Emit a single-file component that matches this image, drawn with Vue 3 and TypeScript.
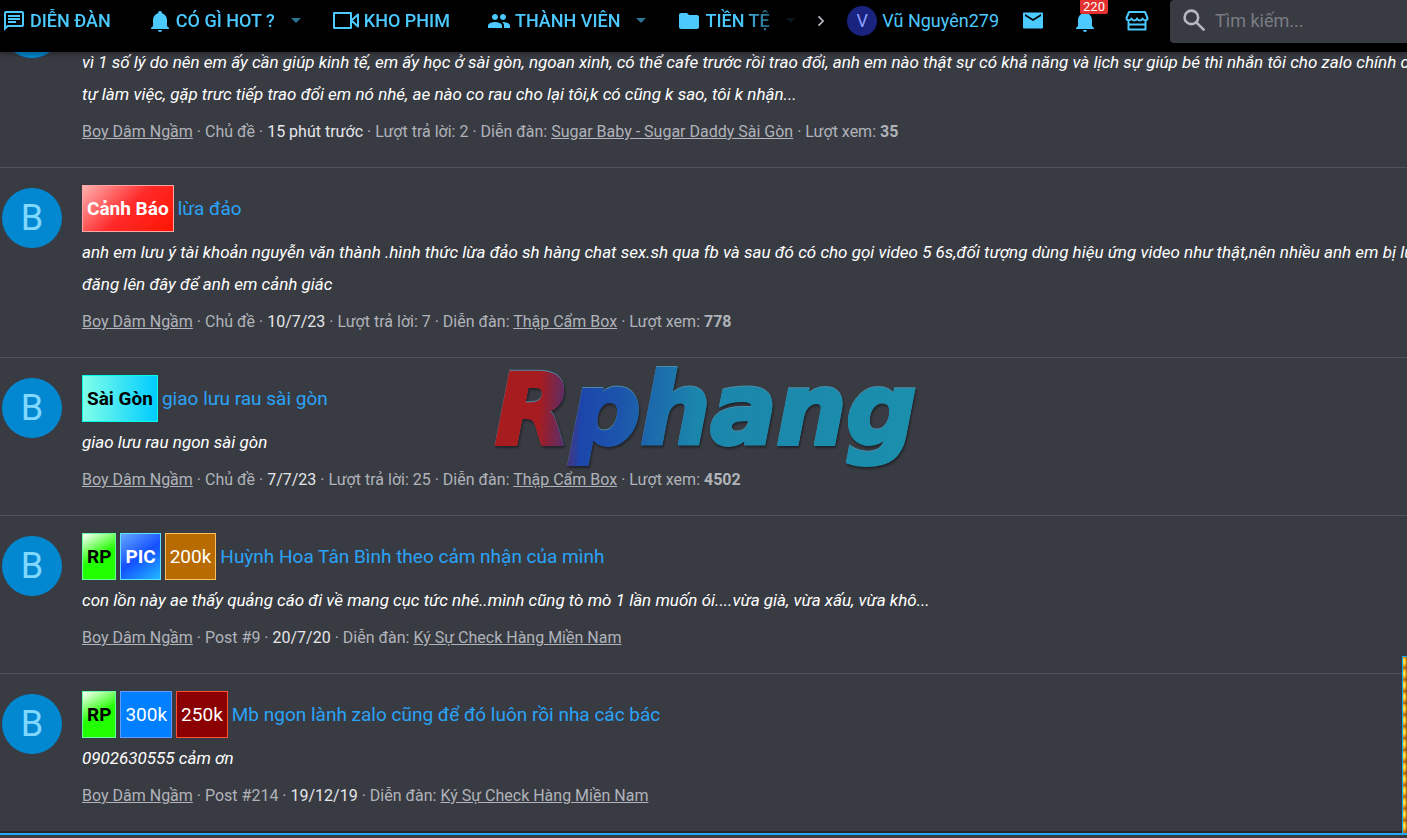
<script setup lang="ts">
interface Label { text: string; kind: string }
interface Post {
  labels: Label[]
  title: string
  lines: string[]
  type: string
  date: string
  replies?: number
  forum: string
  views?: number
}

const posts: Post[] = [
  {
    labels: [],
    title: '',
    lines: [
      'vì 1 số lý do nên em ấy cần giúp kinh tế, em ấy học ở sài gòn, ngoan xinh, có thể cafe trước rồi trao đổi, anh em nào thật sự có khả năng và lịch sự giúp bé thì nhắn tôi cho zalo chính chủ',
      'tự làm việc, gặp trưc tiếp trao đổi em nó nhé, ae nào co rau cho lại tôi,k có cũng k sao, tôi k nhận...',
    ],
    type: 'Chủ đề', date: '15 phút trước', replies: 2, forum: 'Sugar Baby - Sugar Daddy Sài Gòn', views: 35,
  },
  {
    labels: [{ text: 'Cảnh Báo', kind: 'warn' }],
    title: 'lừa đảo',
    lines: [
      'anh em lưu ý tài khoản nguyễn văn thành .hình thức lừa đảo sh hàng chat sex.sh qua fb và sau đó có cho gọi video 5 6s,đối tượng dùng hiệu ứng video như thật,nên nhiều anh em bị lừa,t',
      'đăng lên đây để anh em cảnh giác',
    ],
    type: 'Chủ đề', date: '10/7/23', replies: 7, forum: 'Thập Cẩm Box', views: 778,
  },
  {
    labels: [{ text: 'Sài Gòn', kind: 'saigon' }],
    title: 'giao lưu rau sài gòn',
    lines: ['giao lưu rau ngon sài gòn'],
    type: 'Chủ đề', date: '7/7/23', replies: 25, forum: 'Thập Cẩm Box', views: 4502,
  },
  {
    labels: [{ text: 'RP', kind: 'rp' }, { text: 'PIC', kind: 'pic' }, { text: '200k', kind: 'k200' }],
    title: 'Huỳnh Hoa Tân Bình theo cảm nhận của mình',
    lines: ['con lồn này ae thấy quảng cáo đi về mang cục tức nhé..mình cũng tò mò 1 lần muốn ói....vừa già, vừa xấu, vừa khô...'],
    type: 'Post #9', date: '20/7/20', forum: 'Ký Sự Check Hàng Miền Nam',
  },
  {
    labels: [{ text: 'RP', kind: 'rp' }, { text: '300k', kind: 'k300' }, { text: '250k', kind: 'k250' }],
    title: 'Mb ngon lành zalo cũng để đó luôn rồi nha các bác',
    lines: ['0902630555 cảm ơn'],
    type: 'Post #214', date: '19/12/19', forum: 'Ký Sự Check Hàng Miền Nam',
  },
]
</script>

<template>
  <div class="page">
    <header class="bar">
      <nav class="nav">
        <a class="item" href="#">
          <svg class="icon" viewBox="0 0 24 24"><path d="M4 4h16v12H5.200L4 17.200V4m0-2c-1.100 0-2 .9-2 2v18l4-4h14c1.100 0 2-.9 2-2V4c0-1.100-.9-2-2-2H4zm2 10h8v2H6v-2zm0-3h12v2H6V9zm0-3h12v2H6V6z" /></svg>
          <span>DIỄN ĐÀN</span>
        </a>
        <span class="item has-menu">
          <a class="item-link" href="#">
            <svg class="icon" viewBox="0 0 24 24"><path d="M21 19v1H3v-1l2-2v-6c0-3.100 2.030-5.830 5-6.710V4a2 2 0 0 1 4 0v.29c2.970.88 5 3.610 5 6.710v6l2 2m-7 2a2 2 0 0 1-4 0" /></svg>
            <span>CÓ GÌ HOT ?</span>
          </a>
          <button class="caret" type="button" aria-label="Mở menu"><svg viewBox="0 0 10 5"><path d="M0 0h10L5 5z" /></svg></button>
        </span>
        <a class="item" href="#">
          <svg class="icon wide" viewBox="0 0 28 24"><path class="stroke" d="M2 4h17v15H2zM19.500 11.500 26 5.500v12z" /></svg>
          <span>KHO PHIM</span>
        </a>
        <span class="item has-menu">
          <a class="item-link" href="#">
            <svg class="icon" viewBox="0 0 24 24"><path d="M16 11c1.660 0 2.990-1.340 2.990-3S17.660 5 16 5s-3 1.340-3 3 1.340 3 3 3zm-8 0c1.660 0 2.990-1.340 2.990-3S9.660 5 8 5 5 6.340 5 8s1.340 3 3 3zm0 2c-2.330 0-7 1.170-7 3.500V19h14v-2.500C15 14.170 10.330 13 8 13zm8 0c-.29 0-.62.020-.97.050C16.190 13.890 17 15.020 17 16.500V19h6v-2.500c0-2.330-4.670-3.500-7-3.500z" /></svg>
            <span>THÀNH VIÊN</span>
          </a>
          <button class="caret" type="button" aria-label="Mở menu"><svg viewBox="0 0 10 5"><path d="M0 0h10L5 5z" /></svg></button>
        </span>
        <span class="item has-menu">
          <a class="item-link" href="#">
            <svg class="icon" viewBox="0 0 24 24"><path d="M10 4H4c-1.100 0-2 .9-2 2v12c0 1.100.9 2 2 2h16c1.100 0 2-.9 2-2V8c0-1.100-.9-2-2-2h-8l-2-2z" /></svg>
            <span>TIỀN TỆ</span>
          </a>
          <button class="caret" type="button" aria-label="Mở menu"><svg viewBox="0 0 10 5"><path d="M0 0h10L5 5z" /></svg></button>
        </span>
      </nav>
      <button class="next" type="button" aria-label="Tiếp">
        <svg viewBox="0 0 24 24"><path d="m9 6.500 5.500 5.500L9 17.500" /></svg>
      </button>
      <a class="user" href="#"><span class="user-avatar">V</span><span>Vũ Nguyên279</span></a>
      <div class="tools">
        <button type="button" aria-label="Hộp thư">
          <svg class="icon" viewBox="0 0 24 24"><path d="M21 3.500H3c-.6 0-1 .4-1 1v14c0 .6.400 1 1 1h18c.6 0 1-.4 1-1v-14c0-.6-.4-1-1-1zM20 7l-8 5-8-5V5l8 5 8-5v2z" /></svg>
        </button>
        <button type="button" aria-label="Thông báo">
          <svg class="icon" viewBox="0 0 24 24"><path d="M21 19v1H3v-1l2-2v-6c0-3.100 2.030-5.830 5-6.710V4a2 2 0 0 1 4 0v.29c2.970.88 5 3.610 5 6.710v6l2 2m-7 2a2 2 0 0 1-4 0" /></svg>
          <span class="badge">220</span>
        </button>
        <button type="button" aria-label="Cửa hàng">
          <svg class="icon" viewBox="0 0 24 24"><path class="stroke" d="M4 3h16l2.500 6c0 3-4 3-5 .5-1 2.500-4.500 2.500-5.500 0-1 2.500-4.500 2.500-5.500 0-1 2.500-5 2.500-5-.5zM3.500 12v8.500h17V12M3.500 15.500h17" /></svg>
        </button>
      </div>
      <label class="search">
        <svg viewBox="0 0 24 24"><circle cx="9" cy="9" r="6.500" /><path d="m14 14 7.500 7.500" /></svg>
        <input type="search" placeholder="Tìm kiếm..." aria-label="Tìm kiếm">
      </label>
    </header>

    <main class="list">
      <article v-for="(p, i) in posts" :key="i" class="post">
        <a class="avatar" href="#">B</a>
        <div class="body">
          <h3 class="title">
            <span v-for="l in p.labels" :key="l.text" class="label" :class="l.kind">{{ l.text }}</span>
            <a href="#">{{ p.title }}</a>
          </h3>
          <div class="snippet"><p v-for="line in p.lines" :key="line">{{ line }}</p></div>
          <div class="meta">
            <a href="#">Boy Dâm Ngầm</a> · {{ p.type }} · <time>{{ p.date }}</time><template v-if="p.replies !== undefined"> · Lượt trả lời: {{ p.replies }}</template> · Diễn đàn: <a href="#">{{ p.forum }}</a><template v-if="p.views !== undefined"> · Lượt xem: <b>{{ p.views }}</b></template>
          </div>
        </div>
      </article>
    </main>
    <div class="rule"></div>

    <svg class="watermark" viewBox="0 0 424 120" aria-label="Rphang">
      <defs>
        <linearGradient id="brand" gradientUnits="userSpaceOnUse" x1="0" y1="60" x2="424" y2="80">
          <stop offset="0" stop-color="#a81c1e" />
          <stop offset="0.11" stop-color="#a61c20" />
          <stop offset="0.17" stop-color="#5a2e68" />
          <stop offset="0.21" stop-color="#1c46ac" />
          <stop offset="0.3" stop-color="#1c55ac" />
          <stop offset="0.48" stop-color="#1b86ac" />
          <stop offset="1" stop-color="#1a8fac" />
        </linearGradient>
      </defs>
      <text x="3" y="80">Rphang</text>
    </svg>
    <aside class="strip"></aside>
  </div>
</template>

<style>
body {
  margin: 0;
  background: #393b42;
}
</style>

<style scoped>
.page {
  position: relative;
  display: flex;
  flex-direction: column;
  justify-content: flex-end;
  height: 100vh;
  overflow: hidden;
  box-sizing: border-box;
  padding-bottom: 3px;
  background: #393b42;
  color: #b0b3ba;
  font: 16px/32px Roboto, sans-serif;
}
a { color: inherit; text-decoration: none; }
button {
  display: flex;
  align-items: center;
  padding: 0;
  border: 0;
  background: none;
  color: inherit;
  font: inherit;
}
svg { display: block; flex: none; fill: currentColor; }
.stroke { fill: none; stroke: currentColor; stroke-width: 2; stroke-linejoin: round; }

.bar {
  position: absolute;
  inset: 0 0 auto 0;
  z-index: 2;
  display: flex;
  align-items: flex-start;
  height: 52px;
  background: #000;
  box-shadow: 0 2px 5px rgba(0, 0, 0, 0.35);
  color: #4cc9ff;
  font-size: 18px;
  line-height: 41px;
  white-space: nowrap;
}
.nav {
  flex: 1;
  display: flex;
  min-width: 0;
  padding-left: 2px;
  overflow: hidden;
  font-weight: 500;
  mask-image: linear-gradient(to left, transparent 8px, #000 72px);
}
.item { display: flex; align-items: center; flex: none; gap: 4px; padding-right: 37px; }
.item-link { display: flex; align-items: center; gap: 4px; }
.has-menu { gap: 16px; padding-right: 31px; }
.icon { width: 24px; height: 24px; }
.icon.wide { width: 28px; }
.caret { color: #2d7594; }
.caret svg { width: 10px; height: 5px; }
.next { height: 41px; color: #b8bbc2; }
.next svg { width: 20px; height: 20px; fill: none; stroke: currentColor; stroke-width: 2; }
.user { display: flex; align-items: center; gap: 5px; margin-left: 16px; }
.user-avatar {
  width: 30px;
  height: 30px;
  border-radius: 50%;
  background: #1a237e;
  color: #8c9eff;
  line-height: 30px;
  text-align: center;
}
.tools { display: flex; gap: 28px; margin: 0 21px 0 22px; }
.tools button { position: relative; height: 41px; }
.badge {
  position: absolute;
  left: 7px;
  top: 0;
  width: 28px;
  height: 14px;
  border-radius: 0 0 2px 2px;
  background: #e53030;
  color: #fff;
  font-size: 13px;
  line-height: 14px;
  text-align: center;
}
.search {
  display: flex;
  align-items: center;
  gap: 8px;
  box-sizing: border-box;
  width: 237px;
  height: 43px;
  padding: 0 0 2px 12px;
  border-radius: 4px 0 0 4px;
  background: #393b42;
  color: #b5b8c0;
}
.search svg { width: 25px; height: 25px; fill: none; stroke: currentColor; stroke-width: 2.500; }
.search input {
  flex: 1;
  min-width: 0;
  padding: 0;
  border: 0;
  outline: 0;
  background: none;
  color: #fff;
  font: 18px/40px Roboto, sans-serif;
}
.search input::placeholder { color: #797c84; opacity: 1; }

.list { flex: none; }
.post {
  display: flex;
  gap: 20px;
  padding: 17px 0 19px 2px;
  border-top: 1px solid #505257;
}
.avatar {
  flex: none;
  width: 60px;
  height: 60px;
  margin-top: 3px;
  border-radius: 50%;
  background: #0288d1;
  color: #80d8ff;
  font-size: 36px;
  line-height: 60px;
  text-align: center;
}
.body { flex: 1; min-width: 0; overflow: hidden; white-space: nowrap; }
.title {
  display: flex;
  align-items: center;
  gap: 4px;
  height: 47px;
  margin: 0 0 4px;
  color: #2aa3f7;
  font-size: 19px;
  font-weight: 400;
}
.label { padding: 0 4px; border: 1px solid; line-height: 45px; }
.warn { border-color: #ffa5a5; background: linear-gradient(135deg, #ffb0b0, #ff2a2a 50%, #ff1500); color: #fff; font-weight: 700; }
.saigon { border-color: #00ffe5; background: linear-gradient(90deg, #7fffe9, #00ccff); color: #000; font-weight: 700; }
.rp { border-color: #66ffa0; background: linear-gradient(150deg, #fff, #22ff00 50%); color: #000; font-weight: 700; }
.pic { border-color: #5fe0ff; background: linear-gradient(145deg, #66a8ff, #1450ff 50%, #20b8ff); color: #fff; font-weight: 700; }
.k200 { border-color: #ffc060; background: #b86b00; color: #fff; }
.k300 { border-color: #6699ff; background: #007fff; color: #fff; }
.k250 { border-color: #ff5030; background: #8b0000; color: #fff; }
.snippet { margin-bottom: 6px; color: #fff; font-size: 17px; font-style: italic; }
.snippet p { margin: 0; }
.meta a { text-decoration: underline; }
.meta time { color: #e4e6ea; }
.meta b { font-weight: 700; }
.rule { flex: none; height: 2px; border-top: 2px solid #24262c; background: #22a7ff; }

.watermark {
  position: absolute;
  left: 35%;
  top: 364px;
  width: 424px;
  height: 120px;
  overflow: visible;
  filter: drop-shadow(0 -1px 0 #4b8ba8) drop-shadow(1px 2px 1px #202329);
}
.watermark text {
  fill: url(#brand);
  stroke: url(#brand);
  stroke-width: 4;
  font: italic bold 98px "DejaVu Sans", sans-serif;
}

.strip {
  position: absolute;
  right: 0;
  bottom: 5px;
  width: 4px;
  height: 176px;
  border: solid #00aaff;
  border-width: 1px 0 0 1px;
  background: radial-gradient(ellipse at 30% 40%, #ffe84a 15%, #e89a18 45%, #8a5a14 75%) 0 0 / 8px 12px round;
}
</style>
